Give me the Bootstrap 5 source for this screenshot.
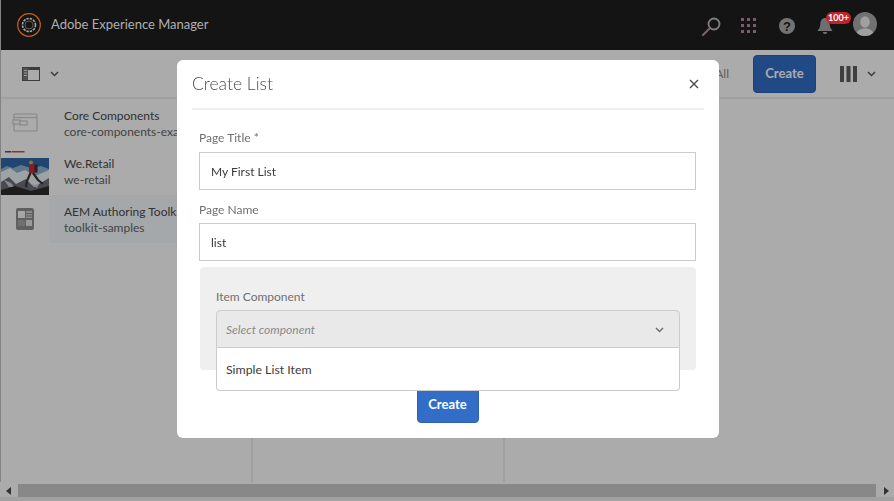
<!DOCTYPE html>
<html lang="en">
<head>
  <meta charset="UTF-8" />
  <meta name="viewport" content="width=device-width, initial-scale=1.0"/>
  <title>Create List</title>
  <link href="https://cdn.jsdelivr.net/npm/bootstrap@5.3.2/dist/css/bootstrap.min.css" rel="stylesheet" />
  <style>
    html, body { height: 100%; overflow: hidden; }
    body { background: #fff; font-family: Lato, "Liberation Sans", sans-serif; font-size: 12px; color: #4b4b4b; }

    /* page behind the dialog */
    .page-wrap { height: 100vh; border-left: 1px solid #c4c4c4; }
    .aem-top { height: 50px; background: #141414; color: #c6c6c6; position: relative; z-index: 1060; margin-left: 0; padding-left: 16px; }
    .aem-top-title { font-size: 13px; margin-left: 10px; color: #b0b0b0; }
    .top-ico { position: absolute; top: 0; }
    .bell-badge { position: absolute; left: 825px; top: 12px; width: 25px; height: 12px; border-radius: 6px; background: #c4222a; color: #fff; font-size: 9px; font-weight: 700; line-height: 12px; text-align: center; }
    .avatar-ico { position: absolute; left: 852px; top: 12px; }
    .tool-strip { height: 49px; background: #fff; border-bottom: 2px solid #efefef; padding: 0 18px 0 21px; }
    .sel-all { margin-right: 24px; font-size: 12px; color: #8f8f8f; }
    .btn-create-top { width: 63px; height: 38px; background: #326ec8; border-color: #2c62b3; color: #fff; font-weight: 700; font-size: 13px; padding: 1px 0 0; border-radius: 4px; }
    .col-area { min-height: 0; }
    .mcol { width: 252px; border-right: 2px solid #efefef; }
    .mcol-row { height: 48px; font-size: 12px; line-height: 16px; color: #4b4b4b; }
    .mcol-row.is-sel { background: #f6fbff; }
    .mcol-text { padding-top: 2px; }
    .mthumb { width: 48px; height: 100%; flex: none; background: #fff; margin-right: 15px; }
    .mthumb svg { display: block; }
    .mcol-row .sub-name { color: #666; }
    .hscroll { height: 15px; background: #fff; padding-top: 2px; margin-left: -1px; }
    .hscroll-thumb { height: 13px; background: #cbcbcb; margin: 0 18px; }
    .hscroll-arrow { position: absolute; top: 487px; width: 0; height: 0; border-top: 4px solid transparent; border-bottom: 4px solid transparent; }
    .hscroll-tail { height: 4px; background: #f1f1f1; margin-left: -1px; }

    /* dialog */
    .modal-backdrop.aem-back { opacity: .33; background: #000; }
    .modal.aem-modal { display: block; overflow: hidden; }
    .aem-dialog { width: 542px; max-width: 542px; margin: 60px 0 0 177px; }
    .aem-content { height: 378px; border: 0; border-radius: 6px; padding: 0 15px; box-shadow: none; }
    .aem-head { height: 50px; padding: 0; border-bottom: 2px solid #f0f0f0; border-radius: 0; }
    .aem-title { font-size: 17.5px; font-weight: 300; color: #4b4b4b; line-height: 1; }
    .aem-x { width: 10px; height: 10px; padding: 0; margin: 0 5px 0 0; border: 0; background: none; line-height: 0; }
    .aem-body { padding: 20px 8px 0 7px; }
    .aem-label { font-size: 12px; color: #707070; line-height: 16px; margin-bottom: 6px; display: block; }
    .aem-input { height: 38px; border: 1px solid #ccc; border-radius: 0; font-size: 12px; padding: 0 11px; color: #3a3a3a; }
    .aem-field { margin-bottom: 12px; }
    .aem-field + .aem-field { margin-bottom: 6px; }
    .aem-field + .aem-field .aem-label { margin-bottom: 5px; }
    .aem-panel { height: 103px; margin-left: 1px; background: #efefef; border-radius: 4px; padding: 22px 16px 0; position: relative; }
    .aem-panel .aem-label { margin-bottom: 5px; }
    .aem-select { height: 38px; background: #e9e9e9; border: 1px solid #ccc; border-radius: 4px 4px 0 0; padding: 1px 15px 0 9px; font-style: italic; color: #8a8a8a; font-size: 12px; }
    .aem-menu { position: absolute; left: 16px; right: 16px; top: 81px; height: 43px; background: #fff; border: 1px solid #ccc; border-top: 0; border-radius: 0 0 4px 4px; padding: 2px 9px 0; color: #3a3a3a; font-size: 12.3px; z-index: 2; }
    .aem-foot { margin-top: 15px; }
    .aem-create { width: 62px; height: 38px; background: #326ec8; border-color: #2c62b3; color: #fff; font-weight: 700; font-size: 13px; padding: 1px 0 0; border-radius: 4px; }
  </style>
</head>
<body>

  <div class="page-wrap d-flex flex-column">
    <!-- top bar -->
    <div class="aem-top d-flex align-items-center">
      <svg width="24" height="24" viewBox="0 0 24 24" fill="none">
        <circle cx="12" cy="12" r="11.3" stroke="#c9611b" stroke-width="1.2"/>
        <circle cx="12" cy="12" r="6.5" stroke="#a8a8a8" stroke-width="1.6" stroke-dasharray="2.4 1"/>
        <circle cx="12" cy="12" r="4" stroke="#5c5c5c" stroke-width="1"/>
      </svg>
      <span class="aem-top-title">Adobe Experience Manager</span>

      <svg class="top-ico" style="left:700px;top:17px" width="20" height="20" viewBox="0 0 20 20" fill="none">
        <circle cx="13" cy="7" r="5.5" stroke="#7f7f7f" stroke-width="1.8"/>
        <path d="M8.500 11.500 2 18" stroke="#75626c" stroke-width="2.2" stroke-linecap="round"/>
      </svg>
      <svg class="top-ico" style="left:739px;top:17px" width="17" height="17" viewBox="0 0 17 17" fill="#7b5a6e">
        <rect x="1" y="1" width="3" height="3"/><rect x="7" y="1" width="3" height="3"/><rect x="13" y="1" width="3" height="3"/>
        <rect x="1" y="7" width="3" height="3"/><rect x="7" y="7" width="3" height="3"/><rect x="13" y="7" width="3" height="3"/>
        <rect x="1" y="13" width="3" height="3"/><rect x="7" y="13" width="3" height="3"/><rect x="13" y="13" width="3" height="3"/>
      </svg>
      <svg class="top-ico" style="left:778px;top:18px" width="16" height="16" viewBox="0 0 16 16">
        <circle cx="8" cy="8" r="8" fill="#737373"/>
        <text x="8" y="12.5" text-anchor="middle" font-family="Liberation Sans" font-weight="700" font-size="13" fill="#141414">?</text>
      </svg>
      <svg class="top-ico" style="left:816px;top:17px" width="16" height="18" viewBox="0 0 16 18" fill="#6f6f6f">
        <path d="M8 1C5 1 3.600 3.400 3.400 6.500 3.200 9.800 2.400 11.600.8 13.200v.8h14.400v-.8C13.600 11.600 12.800 9.800 12.600 6.500 12.400 3.400 11 1 8 1Z"/>
        <path d="M5.800 15h4.400a2.200 2 0 0 1-4.400 0Z"/>
      </svg>
      <span class="bell-badge">100+</span>
      <svg class="avatar-ico" width="24" height="24" viewBox="0 0 24 24">
        <defs><clipPath id="av"><circle cx="12" cy="12" r="12"/></clipPath></defs>
        <circle cx="12" cy="12" r="12" fill="#717171"/>
        <g clip-path="url(#av)" fill="#a0a0a0">
          <ellipse cx="12" cy="10" rx="4.800" ry="5.800"/>
          <path d="M3 24c0-5 4-7.500 9-7.500s9 2.500 9 7.500Z"/>
        </g>
      </svg>
    </div>

    <!-- toolbar -->
    <div class="tool-strip d-flex align-items-center">
      <svg width="18" height="14" viewBox="0 0 18 14">
        <rect x=".5" y=".5" width="17" height="13" fill="none" stroke="#5a5a5a"/>
        <rect x="1" y="1" width="5" height="12" fill="#7a7a7a"/>
        <path d="M2 3.500h3M2 6h3M2 8.500h3" stroke="#e8e8e8"/>
        <rect x="6" y="1" width="11" height="2" fill="#5a5a5a"/>
      </svg>
      <svg style="margin-left:10px" width="9" height="6" viewBox="0 0 9 6" fill="none"><path d="M1 1 4.500 4.500 8 1" stroke="#5a5a5a" stroke-width="1.500"/></svg>
      <div class="ms-auto d-flex align-items-center">
        <span class="sel-all">Select All</span>
        <button class="btn btn-create-top" type="button">Create</button>
        <svg style="margin-left:24px" width="17" height="16" viewBox="0 0 17 16" fill="#5f5f5f">
          <rect x="0" y="0" width="4" height="16"/><rect x="6.500" y="0" width="4" height="16"/><rect x="13" y="0" width="4" height="16"/>
        </svg>
        <svg style="margin-left:10px" width="9" height="6" viewBox="0 0 9 6" fill="none"><path d="M1 1 4.500 4.500 8 1" stroke="#5a5a5a" stroke-width="1.500"/></svg>
      </div>
    </div>

    <!-- miller columns -->
    <div class="col-area d-flex flex-grow-1">
      <div class="mcol">
        <div class="mcol-row d-flex align-items-center">
          <div class="mthumb d-flex align-items-center justify-content-center">
            <svg width="26" height="20" viewBox="0 0 26 20" fill="none" stroke="#ccc" stroke-width="1.200">
              <rect x="2" y="1" width="23" height="17" rx="1"/><path d="M2 4.500h23"/>
              <rect x="1" y="7" width="7" height="4" fill="#fff"/><rect x="8" y="8" width="7" height="4" fill="#fff"/>
            </svg>
          </div>
          <div class="mcol-text"><div>Core Components</div><div class="sub-name">core-components-examples</div></div>
        </div>
        <div class="mcol-row d-flex align-items-center">
          <div class="mthumb">
            <svg width="48" height="48" viewBox="0 0 48 48">
              <rect width="48" height="48" fill="#fff"/>
              <rect x="4" y="4" width="6" height="1.500" fill="#555"/><rect x="10.500" y="4" width="13" height="1.500" fill="#d24a50"/>
              <rect y="11" width="48" height="37" fill="#2f68a8"/>
              <path d="M0 22 6 19 12 21 20 18 30 21 40 19 48 22V48H0Z" fill="#8fb0cf"/>
              <path d="M0 25 9 21 16 26 24 23 34 29 48 23V48H0Z" fill="#eef2f6"/>
              <path d="M0 35 8 30 15 37 25 32 33 40 48 31V48H0Z" fill="#6a6f75"/>
              <path d="M3 33 10 36 14 41 8 40ZM28 36 33 38 38 37 36 41Z" fill="#c9ced3"/>
              <path d="M0 43 14 39 30 44 48 39V48H0Z" fill="#2f2c2a"/>
              <circle cx="30" cy="15.500" r="2" fill="#e5a53a"/>
              <rect x="28" y="17.500" width="6" height="8.500" rx="1" fill="#d3272f"/>
              <rect x="33.500" y="17.500" width="3" height="8" fill="#333"/>
              <path d="M29.500 26 26 34 25 40M32 26 37 33 42 37" stroke="#3a3634" stroke-width="2.200" fill="none"/>
            </svg>
          </div>
          <div class="mcol-text"><div>We.Retail</div><div class="sub-name">we-retail</div></div>
        </div>
        <div class="mcol-row is-sel d-flex align-items-center">
          <div class="mthumb d-flex align-items-center justify-content-center">
            <svg width="18" height="22" viewBox="0 0 18 22">
              <rect width="18" height="22" rx="2" fill="#8f8f8f"/>
              <rect x="2" y="3" width="7" height="7" fill="#f8f8f8"/>
              <rect x="10" y="3" width="6" height="2" fill="#d0d0d0"/><rect x="10" y="6" width="6" height="1.500" fill="#d0d0d0"/><rect x="10" y="8.500" width="6" height="1.500" fill="#d0d0d0"/>
              <rect x="10" y="12" width="6" height="6" fill="#e6e6e6"/>
              <rect x="2" y="12" width="7" height="6" fill="#a8a8a8"/>
            </svg>
          </div>
          <div class="mcol-text"><div class="text-nowrap">AEM Authoring Toolkit</div><div class="sub-name">toolkit-samples</div></div>
        </div>
      </div>
      <div class="mcol"></div>
    </div>

    <div class="hscroll"><div class="hscroll-thumb"></div></div>
    <div class="hscroll-tail"></div>
  </div>
  <span class="hscroll-arrow" style="left:6px;border-right:5px solid #4a4a4a"></span>
  <span class="hscroll-arrow" style="left:884px;border-left:5px solid #4a4a4a"></span>

  <!-- dialog -->
  <div class="modal-backdrop aem-back"></div>
  <div class="modal aem-modal" tabindex="-1">
    <div class="modal-dialog aem-dialog">
      <div class="modal-content aem-content">
        <div class="modal-header aem-head">
          <h5 class="modal-title aem-title">Create List</h5>
          <button type="button" class="aem-x ms-auto" aria-label="Close">
            <svg width="10" height="10" viewBox="0 0 10 10" fill="none"><path d="M1 1 9 9M9 1 1 9" stroke="#4b4b4b" stroke-width="1.400"/></svg>
          </button>
        </div>
        <div class="modal-body aem-body">
          <div class="aem-field">
            <label class="aem-label">Page Title *</label>
            <input class="form-control aem-input" type="text" value="My First List" />
          </div>
          <div class="aem-field">
            <label class="aem-label">Page Name</label>
            <input class="form-control aem-input" type="text" value="list" />
          </div>
          <div class="aem-panel">
            <label class="aem-label">Item Component</label>
            <div class="aem-select d-flex align-items-center justify-content-between">
              <span>Select component</span>
              <svg width="9" height="6" viewBox="0 0 9 6" fill="none"><path d="M1 1 4.500 4.500 8 1" stroke="#707070" stroke-width="1.500"/></svg>
            </div>
            <div class="aem-menu d-flex align-items-center">Simple List Item</div>
          </div>
          <div class="aem-foot text-center">
            <button class="btn aem-create" type="button">Create</button>
          </div>
        </div>
      </div>
    </div>
  </div>

  <script src="https://cdn.jsdelivr.net/npm/bootstrap@5.3.2/dist/js/bootstrap.bundle.min.js"></script>
</body>
</html>
